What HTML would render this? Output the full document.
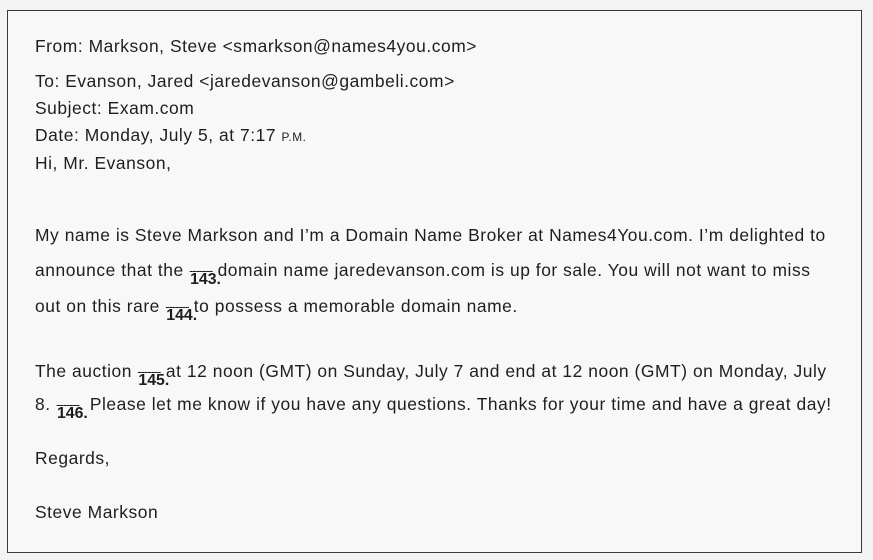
<!DOCTYPE html>
<html><head><meta charset="utf-8"><style>
html,body{margin:0;padding:0}
body{width:873px;height:560px;background:#f3f3f3;position:relative;overflow:hidden;font-family:"Liberation Sans",Arial,sans-serif;color:#1e1e1e}
.box{position:absolute;left:7px;top:10px;width:853px;height:541px;border:1.5px solid #3a3a3a;background:#f8f8f8}
.l{position:absolute;left:35px;font-size:17.6px;letter-spacing:0.55px;white-space:nowrap;line-height:20px;transform:scaleX(0.99);transform-origin:left}
.b{position:relative;display:inline-block;letter-spacing:-1px;font-size:13px;vertical-align:1px}
.b i{position:absolute;left:1px;top:9px;font-style:normal;font-weight:bold;font-size:16px;letter-spacing:0}
.sc{font-size:12px}
</style></head><body>
<div class="box"></div>
<div class="l" style="top:36px">From: Markson, Steve &lt;smarkson@names4you.com&gt;</div>
<div class="l" style="top:71px">To: Evanson, Jared &lt;jaredevanson@gambeli.com&gt;</div>
<div class="l" style="top:98px">Subject: Exam.com</div>
<div class="l" style="top:125px">Date: Monday, July 5, at 7:17 <span class="sc">P.M.</span></div>
<div class="l" style="top:153px">Hi, Mr. Evanson,</div>
<div class="l" style="top:225px">My name is Steve Markson and I’m a Domain Name Broker at Names4You.com. I’m delighted to</div>
<div class="l" style="top:260px">announce that the <span class="b">-------<i>143.</i></span> domain name jaredevanson.com is up for sale. You will not want to miss</div>
<div class="l" style="top:296px">out on this rare <span class="b">-------<i>144.</i></span> to possess a memorable domain name.</div>
<div class="l" style="top:361px">The auction <span class="b">-------<i>145.</i></span> at 12 noon (GMT) on Sunday, July 7 and end at 12 noon (GMT) on Monday, July</div>
<div class="l" style="top:394px">8. <span class="b">-------<i>146.</i></span>. Please let me know if you have any questions. Thanks for your time and have a great day!</div>
<div class="l" style="top:448px">Regards,</div>
<div class="l" style="top:502px">Steve Markson</div>
</body></html>
